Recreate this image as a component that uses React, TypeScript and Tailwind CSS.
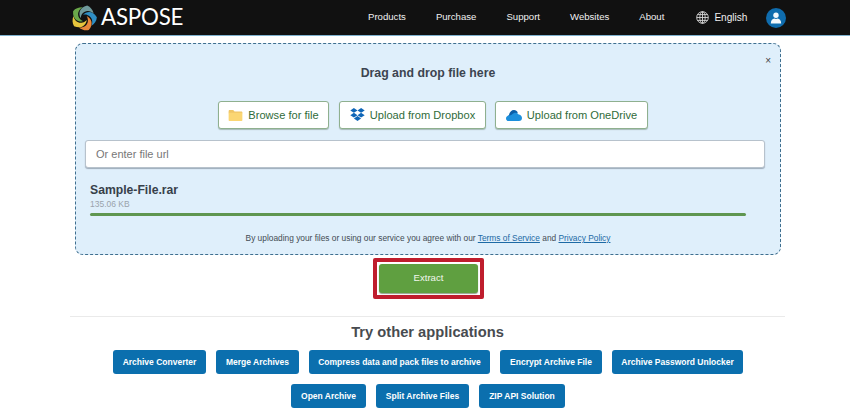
import React from "react";

const blades = [
  { c: "#2f8fc4", r: 20 },
  { c: "#e8873a", r: 92 },
  { c: "#e6c53c", r: 164 },
  { c: "#6aa84a", r: 236 },
  { c: "#6f9a9c", r: 308 },
];

function Logo() {
  return (
    <svg width="26" height="26" viewBox="-13 -13 26 26" aria-hidden="true">
      {blades.map((b) => (
        <path
          key={b.r}
          transform={`rotate(${b.r})`}
          d="M-2.2 -2.6 C0 -7 5 -10.5 11.8 -5.2 C12.8 -1.6 11.8 1.8 9.6 4.8 C10 0 7 -4 2.6 -4 C0.8 -4 -0.8 -3.4 -2.2 -2.6 Z"
          fill={b.c}
        />
      ))}
    </svg>
  );
}

function Globe() {
  return (
    <svg width="13" height="13" viewBox="0 0 13 13" fill="none" stroke="#d6d6d6" strokeWidth="0.9" aria-hidden="true">
      <circle cx="6.5" cy="6.5" r="5.8" />
      <ellipse cx="6.5" cy="6.5" rx="2.7" ry="5.8" />
      <path d="M6.5 .7V12.3M.7 6.5H12.3M1.5 3.6H11.5M1.5 9.4H11.5" />
    </svg>
  );
}

function Avatar() {
  return (
    <div className="w-5 h-5 rounded-full bg-[#0f6cad] flex items-center justify-center">
      <svg width="12" height="12" viewBox="0 0 12 12" fill="#f4f8fb" aria-hidden="true">
        <circle cx="6" cy="3.3" r="2.7" />
        <path d="M.8 11.5C.8 8.3 2.8 6.8 4.2 6.6C5.3 7.2 6.7 7.2 7.8 6.6C9.2 6.8 11.2 8.3 11.2 11.5Z" />
      </svg>
    </div>
  );
}

function Folder() {
  return (
    <svg width="15" height="11" viewBox="0 0 15 12" aria-hidden="true">
      <path d="M0 1.2C0 .5.5 0 1.2 0H5L6.5 1.6H13.8C14.5 1.6 15 2.1 15 2.8V3.5H0Z" fill="#f0c667" />
      <path d="M0 3H15V10.8C15 11.5 14.5 12 13.8 12H1.2C.5 12 0 11.5 0 10.8Z" fill="#fbd673" />
    </svg>
  );
}

function Dropbox() {
  return (
    <svg width="15" height="14" viewBox="0 0 15 14" fill="#0f66b8" aria-hidden="true">
      <path d="M3.9 0 7.5 2.4 3.9 4.8.3 2.4Z" />
      <path d="M11.1 0 14.7 2.4 11.1 4.8 7.5 2.4Z" />
      <path d="M3.9 4.8 7.5 7.2 3.9 9.6.3 7.2Z" />
      <path d="M11.1 4.8 14.7 7.2 11.1 9.6 7.5 7.2Z" />
      <path d="M3.9 10.4 7.5 8 11.1 10.4 7.5 13 Z" />
    </svg>
  );
}

function OneDrive() {
  return (
    <svg width="16" height="11" viewBox="0 0 16 11" aria-hidden="true">
      <path d="M3 5C3.4 2 5.6 0 8 0C9.8 0 11 1 11.8 2.6L7 7 2 6Z" fill="#0a5ea8" />
      <path d="M6 4.4C8 2.2 11.2 2 12.6 4.4C14.6 4.4 16 6.2 16 8C16 9.8 14.8 11 13 11H2.6C1 11 0 9.8 0 8.4C0 6.6 1.4 5.2 3.2 5.4C4.2 5.4 5 5 6 4.4Z" fill="#1c8fdc" />
    </svg>
  );
}

function UploadButton({ icon, label, width }: { icon: React.ReactNode; label: string; width: string }) {
  return (
    <button className={`${width} h-7 gap-[5px] flex items-center justify-center bg-white border border-[#8fb08f] rounded-[3px] shadow-[0_1px_1px_rgba(60,90,60,0.35)] text-[11.1px] text-[#2f6b3a]`}>
      {icon}
      <span>{label}</span>
    </button>
  );
}

const rowOne = ["Archive Converter", "Merge Archives", "Compress data and pack files to archive", "Encrypt Archive File", "Archive Password Unlocker"];
const rowOneWidths = ["w-[93px]", "w-[83px]", "w-[181px]", "w-[102px]", "w-[131px]"];
const rowTwo = ["Open Archive", "Split Archive Files", "ZIP API Solution"];
const rowTwoWidths = ["w-[75px]", "w-[93px]", "w-[86px]"];

function AppButton({ label, width }: { label: string; width: string }) {
  return (
    <a className={`${width} h-6 flex items-center justify-center rounded-[3px] bg-[#0b6fae] text-white text-[8.5px] font-bold whitespace-nowrap`}>
      {label}
    </a>
  );
}

export default function App() {
  return (
    <div className="w-[850px] h-[418px] overflow-hidden bg-white font-['Liberation_Sans',Arial,sans-serif]">
      <header className="h-9 bg-[#111111] border-b border-[#7fb2cf] flex items-center text-[#f0f0f0]">
        <div className="ml-[71px] w-[297px] flex items-center gap-[4px]">
          <Logo />
          <span className="text-[22.3px] leading-none text-white font-['Lato',sans-serif] tracking-[-0.2px]">ASPOSE</span>
        </div>
        <nav className="flex items-center gap-[30px] text-[9.6px]">
          <span>Products</span>
          <span>Purchase</span>
          <span>Support</span>
          <span>Websites</span>
          <span>About</span>
        </nav>
        <div className="ml-[32px] flex items-center gap-[5px] text-[10.1px]">
          <Globe />
          <span>English</span>
        </div>
        <div className="ml-[19px]">
          <Avatar />
        </div>
      </header>

      <main className="ml-[70px] w-[715px] pt-[7px]">
        <section className="relative ml-[5px] w-[706px] h-[212px] rounded-[8px] border border-dashed border-[#3f6f8f] bg-[#dfeffb] px-[9px] pt-[21px]">
          <span className="absolute top-[12px] right-[9px] text-[10px] leading-none text-[#444]">×</span>
          <h2 className="text-center text-[12.3px] leading-[16px] font-bold text-[#3c4450]">Drag and drop file here</h2>
          <div className="mt-[20px] flex pl-[133px]">
            <UploadButton icon={<Folder />} label="Browse for file" width="w-[111px]" />
            <div className="w-[10px]" />
            <UploadButton icon={<Dropbox />} label="Upload from Dropbox" width="w-[147px]" />
            <div className="w-[9px]" />
            <UploadButton icon={<OneDrive />} label="Upload from OneDrive" width="w-[153px]" />
          </div>
          <div className="mt-[11px] h-7 w-[680px] bg-white border border-[#b7c2cc] rounded-[3px] shadow-[0_1px_1px_rgba(60,70,90,0.4)] flex items-center pl-[10px] text-[11px] text-[#777]">
            Or enter file url
          </div>
          <div className="mt-[15px] pl-[5px] text-[12.2px] leading-[15px] font-bold text-[#37404a]">Sample-File.rar</div>
          <div className="pl-[5px] mt-[1px] text-[8.5px] leading-[11px] text-[#9aa3ab]">135.06 KB</div>
          <div className="mt-[3px] ml-[5px] w-[656px] h-[3px] rounded-full bg-[#5f9650]" />
          <p className="mt-[16px] text-center text-[8.35px] leading-[12px] text-[#444c54]">
            By uploading your files or using our service you agree with our{" "}
            <a className="text-[#1d6aa5] underline">Terms of Service</a> and{" "}
            <a className="text-[#1d6aa5] underline">Privacy Policy</a>
          </p>
        </section>

        <div className="mt-[3px] ml-[303px] w-[111px] h-[41px] border-[4px] border-[#bf1d2d] rounded-[2px] p-[2px]">
          <button className="w-full h-full rounded-[3px] bg-[#5f9f40] text-[#f2f7ee] text-[9.6px] shadow-[0_1px_1px_rgba(40,70,30,0.5)]">
            Extract
          </button>
        </div>

        <hr className="mt-[17px] border-0 h-px bg-[#eaeaea]" />
        <h3 className="mt-[6px] text-center text-[14.7px] leading-[18px] font-bold text-[#474b50]">Try other applications</h3>
        <div className="mt-[9px] flex justify-center gap-[10px] pl-[1px]">
          {rowOne.map((label, i) => (
            <AppButton key={label} label={label} width={rowOneWidths[i]} />
          ))}
        </div>
        <div className="mt-[10px] flex justify-center gap-[10px] pl-[1px]">
          {rowTwo.map((label, i) => (
            <AppButton key={label} label={label} width={rowTwoWidths[i]} />
          ))}
        </div>
      </main>
    </div>
  );
}
